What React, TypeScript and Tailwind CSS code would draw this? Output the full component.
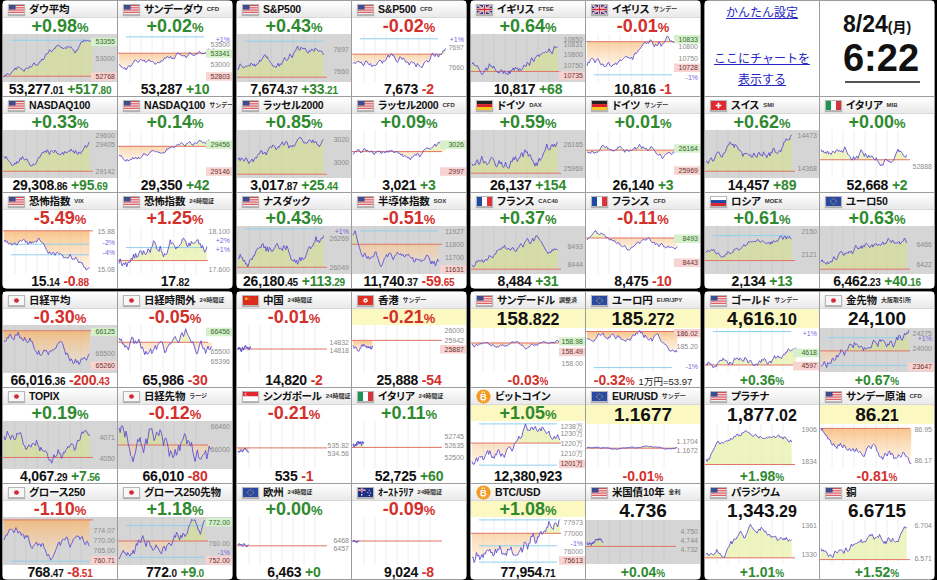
import React from 'react';

type FlagName = 'us' | 'jp' | 'uk' | 'de' | 'fr' | 'ch' | 'it' | 'ru' | 'eu' | 'cn' | 'hk' | 'sg' | 'au' | 'btc';
type Lbl = [string, number, 'g' | 'r' | 'n' | 'p'];

type Q = {
  t?: 'pct' | 'val' | 'link' | 'clock';
  name?: string;
  sub?: string;
  flag?: FlagName;
  pct?: string;
  up?: boolean;
  main?: string;
  dec?: string;
  chg?: string;
  cdec?: string;
  gray?: boolean;
  yel?: boolean;
  lb?: Lbl[];
  bands?: number[];
  pc?: number;
  yr?: [number, number];
  s?: number;
  e?: number;
  end?: number;
  seed?: number;
  extra?: string;
};

const W = 114;

function rng(seed: number) {
  let a = seed * 9973 + 17;
  return () => {
    a = (a + 0x6d2b79f5) | 0;
    let t = Math.imul(a ^ (a >>> 15), 1 | a);
    t = (t + Math.imul(t ^ (t >>> 7), 61 | t)) ^ t;
    return ((t ^ (t >>> 14)) >>> 0) / 4294967296;
  };
}

function Flag({ f }: { f: FlagName }) {
  if (f === 'btc') {
    return (
      <svg width="15" height="15" viewBox="0 0 16 16" className="shrink-0">
        <circle cx="8" cy="8" r="7.6" fill="#f39b22" />
        <path d="M6.6 2.6v2M8.8 2.6v2M6.6 11.4v2M8.8 11.4v2" stroke="#fff" strokeWidth="1" />
        <text x="8" y="11.8" textAnchor="middle" fontSize="10" fontWeight="700" fill="#fff" fontFamily="Liberation Sans">B</text>
      </svg>
    );
  }
  let body: React.ReactNode = null;
  switch (f) {
    case 'us':
      body = (
        <>
          <rect width="16" height="10" fill="#fff" />
          {[0, 2, 4, 6, 8].map((y) => (
            <rect key={y} y={y} width="16" height="1" fill="#cf3c44" />
          ))}
          <rect width="7" height="5" fill="#3d4b8f" />
        </>
      );
      break;
    case 'jp':
      body = (
        <>
          <rect width="16" height="10" fill="#f7f7f7" />
          <circle cx="8" cy="5" r="2.6" fill="#d42a3c" />
        </>
      );
      break;
    case 'uk':
      body = (
        <>
          <rect width="16" height="10" fill="#24408e" />
          <path d="M0 0L16 10M16 0L0 10" stroke="#fff" strokeWidth="2" />
          <path d="M0 0L16 10M16 0L0 10" stroke="#cf2a36" strokeWidth="0.7" />
          <path d="M8 0V10M0 5H16" stroke="#fff" strokeWidth="3" />
          <path d="M8 0V10M0 5H16" stroke="#cf2a36" strokeWidth="1.6" />
        </>
      );
      break;
    case 'de':
      body = (
        <>
          <rect width="16" height="3.4" fill="#222" />
          <rect y="3.4" width="16" height="3.3" fill="#d8202a" />
          <rect y="6.7" width="16" height="3.3" fill="#f7c51c" />
        </>
      );
      break;
    case 'fr':
      body = (
        <>
          <rect width="5.4" height="10" fill="#1f4aa3" />
          <rect x="5.4" width="5.3" height="10" fill="#fff" />
          <rect x="10.7" width="5.3" height="10" fill="#e0313a" />
        </>
      );
      break;
    case 'it':
      body = (
        <>
          <rect width="5.4" height="10" fill="#1d9452" />
          <rect x="5.4" width="5.3" height="10" fill="#fff" />
          <rect x="10.7" width="5.3" height="10" fill="#d5333c" />
        </>
      );
      break;
    case 'ch':
      body = (
        <>
          <rect width="16" height="10" fill="#e0282f" />
          <path d="M8 2V8M5 5H11" stroke="#fff" strokeWidth="1.8" />
        </>
      );
      break;
    case 'ru':
      body = (
        <>
          <rect width="16" height="3.4" fill="#fff" />
          <rect y="3.4" width="16" height="3.3" fill="#1e48a8" />
          <rect y="6.7" width="16" height="3.3" fill="#d7282f" />
        </>
      );
      break;
    case 'eu':
      body = (
        <>
          <rect width="16" height="10" fill="#2a48a6" />
          {Array.from({ length: 12 }).map((_, i) => (
            <circle key={i} cx={8 + 3 * Math.cos((i * Math.PI) / 6)} cy={5 + 3 * Math.sin((i * Math.PI) / 6)} r="0.5" fill="#f6d21e" />
          ))}
        </>
      );
      break;
    case 'cn':
      body = (
        <>
          <rect width="16" height="10" fill="#dc2a1c" />
          <circle cx="3.5" cy="3" r="1.4" fill="#f8d81c" />
          <circle cx="6.3" cy="1.5" r="0.45" fill="#f8d81c" />
          <circle cx="7" cy="3" r="0.45" fill="#f8d81c" />
          <circle cx="6.3" cy="4.5" r="0.45" fill="#f8d81c" />
        </>
      );
      break;
    case 'hk':
      body = (
        <>
          <rect width="16" height="10" fill="#de2f24" />
          <circle cx="8" cy="5" r="2.4" fill="#fff" />
          <circle cx="8" cy="5" r="0.8" fill="#de2f24" />
        </>
      );
      break;
    case 'sg':
      body = (
        <>
          <rect width="16" height="5" fill="#e0262f" />
          <rect y="5" width="16" height="5" fill="#fff" />
          <circle cx="3.4" cy="2.5" r="1.6" fill="#fff" />
          <circle cx="4.1" cy="2.5" r="1.5" fill="#e0262f" />
        </>
      );
      break;
    case 'au':
      body = (
        <>
          <rect width="16" height="10" fill="#1e2f86" />
          <path d="M4 0V5M0 2.5H8" stroke="#fff" strokeWidth="1.4" />
          <path d="M4 0V5M0 2.5H8" stroke="#cf2a36" strokeWidth="0.7" />
          <circle cx="4" cy="7.6" r="0.9" fill="#fff" />
          <circle cx="12" cy="2.5" r="0.6" fill="#fff" />
          <circle cx="10.5" cy="5" r="0.6" fill="#fff" />
          <circle cx="13.2" cy="5.5" r="0.6" fill="#fff" />
          <circle cx="12" cy="8.2" r="0.6" fill="#fff" />
        </>
      );
      break;
  }
  return (
    <span className="inline-flex shrink-0 border border-[#b8b8b8] shadow-[0_1px_1px_rgba(0,0,0,0.25)]">
      <svg width="15" height="9" viewBox="0 0 16 10" preserveAspectRatio="none" className="block">
        {body}
      </svg>
    </span>
  );
}

const LBL = {
  n: { fg: '#8c8c8c', bg: '' },
  g: { fg: '#356b2c', bg: '#d6f0cd' },
  r: { fg: '#6e3434', bg: '#f7d3d1' },
  p: { fg: '#7b5fdc', bg: '' },
};

function Chart({ q, id, h }: { q: Q; id: string; h: number }) {
  const r = rng(q.seed ?? 1);
  const n = 80;
  const raw: number[] = [];
  let v = 0;
  for (let i = 0; i < n; i++) {
    raw.push(v);
    v += (r() - 0.5) * 1.3;
  }
  const s = q.s ?? 0;
  const e = q.e ?? 1;
  const vals = raw.map((x, i) => x - (raw[n - 1] * i) / (n - 1) + s + ((e - s) * i) / (n - 1));
  const mn = Math.min(...vals);
  const mx = Math.max(...vals);
  const [t, b] = q.yr ?? [0.2, 0.8];
  const x1 = (q.end ?? 0.76) * W;
  const pts = vals.map((x, i) => [1 + ((x1 - 1) * i) / (n - 1), (t + ((mx - x) / (mx - mn || 1)) * (b - t)) * h]);
  const line = pts.map(([x, y], i) => `${i ? 'L' : 'M'}${x.toFixed(1)} ${y.toFixed(1)}`).join(' ');
  const pcY = (q.pc ?? 0.5) * h;
  const area = `${line} L${x1.toFixed(1)} ${pcY.toFixed(1)} L1 ${pcY.toFixed(1)} Z`;
  const gray = !!q.gray;
  return (
    <svg width={W} height={h} viewBox={`0 0 ${W} ${h}`} className="block">
      <defs>
        <clipPath id={`${id}a`}>
          <rect x="0" y="0" width={W} height={pcY} />
        </clipPath>
        <clipPath id={`${id}b`}>
          <rect x="0" y={pcY} width={W} height={h - pcY} />
        </clipPath>
        <linearGradient id={`${id}g`} x1="0" y1="0" x2="0" y2="1">
          <stop offset="0" stopColor="#f6b56e" stopOpacity="0.8" />
          <stop offset="1" stopColor="#fde3c4" stopOpacity="0.4" />
        </linearGradient>
      </defs>
      <rect width={W} height={h} fill={gray ? '#d5d5d5' : '#fff'} />
      {[12, 23, 34, 45, 56, 67, 78].map((x) => (
        <line key={x} x1={x} y1="0" x2={x} y2={h} stroke={gray ? '#cbcbcb' : '#eeeeee'} strokeWidth="1" />
      ))}
      <path d={area} fill={gray ? 'rgba(214,224,140,0.6)' : 'rgba(232,240,170,0.75)'} clipPath={`url(#${id}a)`} />
      <path d={area} fill={`url(#${id}g)`} clipPath={`url(#${id}b)`} />
      {(q.bands ?? []).map((y, i) => (
        <line key={i} x1="8" y1={y * h} x2={W - 28} y2={y * h} stroke="#8fd0ee" strokeWidth="1" />
      ))}
      <line x1="0" y1={pcY} x2={W - 24} y2={pcY} stroke="#e07566" strokeWidth="1" />
      <path d={line} fill="none" stroke="#5b4fd6" strokeWidth="0.9" />
      {(q.lb ?? []).map(([txt, y, k], i) => {
        const c = LBL[k];
        const yy = Math.min(Math.max(y * h + 2.5, 7.5), h - 2);
        return (
          <g key={i}>
            {c.bg && <rect x={W - 26} y={yy - 6.5} width="26" height="8.5" fill={c.bg} />}
            <text x={W - 2} y={yy} textAnchor="end" fontSize="7" fill={c.fg} fontFamily="Liberation Sans">
              {txt}
            </text>
          </g>
        );
      })}
    </svg>
  );
}

function Header({ q }: { q: Q }) {
  return (
    <div className="flex h-[17px] shrink-0 items-center gap-[4px] overflow-hidden border-b border-[#d8d8d8] bg-linear-to-b from-white to-[#e9e9e9] pl-[5px]">
      {q.flag && <Flag f={q.flag} />}
      <span className="whitespace-nowrap text-[10.5px] font-bold leading-none tracking-[-0.2px] text-[#111] [font-feature-settings:'palt']">{q.name}</span>
      {q.sub && <span className="whitespace-nowrap text-[6px] font-bold leading-none text-[#333]">{q.sub}</span>}
    </div>
  );
}

function PctCell({ q, id }: { q: Q; id: string }) {
  const col = q.up ? 'text-[#2f8a2f]' : 'text-[#d3302c]';
  return (
    <div className="flex flex-col overflow-hidden bg-white">
      <Header q={q} />
      <div className={`h-[16px] shrink-0 text-center font-bold leading-[17px] ${col} ${q.yel ? 'bg-[#fbf8c2]' : ''}`}>
        <span className="text-[18px]">{q.pct}</span>
        <span className="text-[13px]">%</span>
      </div>
      <Chart q={q} id={id} h={48} />
      <div className="h-[14px] shrink-0 text-center font-bold leading-[14px] tracking-[-0.2px] text-[#111]">
        <span className="text-[14px]">{q.main}</span>
        <span className="text-[10px]">{q.dec}</span>
        {q.chg && (
          <span className={col}>
            <span className="text-[14px]"> {q.chg}</span>
            <span className="text-[10px]">{q.cdec}</span>
          </span>
        )}
      </div>
    </div>
  );
}

function ValCell({ q, id }: { q: Q; id: string }) {
  const col = q.up ? 'text-[#2f8a2f]' : 'text-[#d3302c]';
  return (
    <div className="flex flex-col overflow-hidden bg-white">
      <Header q={q} />
      <div className={`h-[19px] shrink-0 text-center font-bold leading-[20px] text-[#111] ${q.yel ? 'bg-[#fbf8c2]' : ''}`}>
        <span className="text-[19px]">{q.main}</span>
        <span className="text-[16px]">{q.dec}</span>
      </div>
      <Chart q={q} id={id} h={44} />
      <div className="h-[15px] shrink-0 text-center leading-[15px]">
        <span className={`font-bold ${col}`}>
          <span className="text-[14px]">{q.pct}</span>
          <span className="text-[10px]">%</span>
        </span>
        {q.extra && <span className="ml-[4px] text-[9.5px] text-[#222]">{q.extra}</span>}
      </div>
    </div>
  );
}

function LinkCell() {
  return (
    <div className="flex flex-col items-center bg-white pt-[3px] text-[12px] leading-[18px] text-[#2626c4] underline">
      <span>かんたん設定</span>
      <span className="mt-[28px]">ここにチャートを</span>
      <span className="mt-[3px]">表示する</span>
    </div>
  );
}

function ClockCell() {
  return (
    <div className="flex flex-col items-center bg-white text-[#111]">
      <div className="mt-[12px] font-bold leading-none">
        <span className="text-[23px]">8/24</span>
        <span className="text-[14px]">(月)</span>
      </div>
      <div className="mt-[3px] pl-[8px] text-[38px] font-bold leading-none">6:22</div>
      <div className="mt-[4px] ml-[10px] h-[2px] w-[75px] bg-[#555]" />
    </div>
  );
}

const top: Q[][] = [
  [
    { name: 'ダウ平均', flag: 'us', pct: '+0.98', up: true, main: '53,277', dec: '.01', chg: '+517', cdec: '.80', gray: true, pc: 0.88, yr: [0.12, 0.9], s: -7, e: 3, bands: [0.13], lb: [['53355', 0.16, 'g'], ['53000', 0.52, 'n'], ['52768', 0.88, 'r']], end: 0.78 },
    { name: 'サンデーダウ', sub: 'CFD', flag: 'us', pct: '+0.02', up: true, main: '53,287', chg: '+10', pc: 0.4, yr: [0.3, 0.75], s: -4, e: 0, bands: [0.06], lb: [['+1%', 0.04, 'p'], ['53500', 0.22, 'n'], ['53341', 0.4, 'g'], ['53000', 0.64, 'n'], ['52803', 0.88, 'r']], end: 0.84 },
    { name: 'NASDAQ100', flag: 'us', pct: '+0.33', up: true, main: '29,308', dec: '.86', chg: '+95', cdec: '.69', gray: true, pc: 0.86, yr: [0.25, 0.75], s: -2, e: 1, lb: [['29600', 0.06, 'n'], ['29405', 0.3, 'n'], ['29142', 0.86, 'n']] },
    { name: 'NASDAQ100', sub: 'サンデー', flag: 'us', pct: '+0.14', up: true, main: '29,350', chg: '+42', pc: 0.34, yr: [0.2, 0.65], s: -4, e: 0.5, lb: [['29456', 0.3, 'g'], ['29146', 0.86, 'r']], end: 0.8 },
    { name: '恐怖指数', sub: 'VIX', flag: 'us', pct: '-5.49', up: false, main: '15', dec: '.14', chg: '-0', cdec: '.88', pc: 0.1, yr: [0.25, 0.92], s: 3, e: -3, bands: [0.38, 0.6], lb: [['15.88', 0.08, 'n'], ['-2%', 0.34, 'p'], ['-4%', 0.56, 'p'], ['15.08', 0.9, 'n']] },
    { name: '恐怖指数', sub: '24時間証', flag: 'us', pct: '+1.25', up: false, main: '17', dec: '.82', pc: 0.72, yr: [0.25, 0.85], s: -1, e: 1, bands: [0.45], lb: [['18.100', 0.08, 'n'], ['+2%', 0.3, 'p'], ['+1%', 0.48, 'p'], ['17.600', 0.9, 'n']], end: 0.78 },
  ],
  [
    { name: 'S&P500', flag: 'us', pct: '+0.43', up: true, main: '7,674', dec: '.37', chg: '+33', cdec: '.21', gray: true, pc: 0.9, yr: [0.25, 0.75], s: -2, e: 1, bands: [0.15], lb: [['7697', 0.32, 'n'], ['7660', 0.78, 'n']] },
    { name: 'S&P500', sub: 'CFD', flag: 'us', pct: '-0.02', up: false, main: '7,673', chg: '-2', pc: 0.42, yr: [0.3, 0.7], s: -3, e: 0, bands: [0.1], lb: [['+1%', 0.06, 'p'], ['7697', 0.28, 'n'], ['7660', 0.7, 'n']], end: 0.82 },
    { name: 'ラッセル2000', flag: 'us', pct: '+0.85', up: true, main: '3,017', dec: '.87', chg: '+25', cdec: '.44', gray: true, pc: 0.92, yr: [0.15, 0.7], s: -2, e: 2, lb: [['3020', 0.2, 'n'], ['3000', 0.68, 'n']] },
    { name: 'ラッセル2000', sub: 'CFD', flag: 'us', pct: '+0.09', up: true, main: '3,021', chg: '+3', pc: 0.45, yr: [0.25, 0.62], s: -1, e: 0.5, lb: [['3026', 0.3, 'g'], ['2997', 0.86, 'r']], end: 0.82 },
    { name: 'ナスダック', flag: 'us', pct: '+0.43', up: true, main: '26,180', dec: '.45', chg: '+113', cdec: '.29', gray: true, pc: 0.86, yr: [0.2, 0.85], s: -2, e: 1, bands: [0.06], lb: [['+1%', 0.04, 'p'], ['26269', 0.26, 'n'], ['26049', 0.86, 'n']] },
    { name: '半導体指数', sub: 'SOX', flag: 'us', pct: '-0.51', up: false, main: '11,740', dec: '.37', chg: '-59', cdec: '.65', gray: true, pc: 0.38, yr: [0.1, 0.85], s: 4, e: 0, bands: [0.1], lb: [['11927', 0.08, 'n'], ['11800', 0.38, 'n'], ['11700', 0.66, 'n'], ['11631', 0.9, 'r']] },
  ],
  [
    { name: 'イギリス', sub: 'FTSE', flag: 'uk', pct: '+0.64', up: true, main: '10,817', chg: '+68', gray: true, pc: 0.78, yr: [0.25, 0.85], s: 0, e: 3, lb: [['10850', 0.04, 'n'], ['10831', 0.22, 'n'], ['10800', 0.42, 'n'], ['10750', 0.66, 'n'], ['10735', 0.86, 'r']] },
    { name: 'イギリス', sub: 'サンデー', flag: 'uk', pct: '-0.01', up: false, main: '10,816', chg: '-1', pc: 0.16, yr: [0.05, 0.68], s: -3, e: 2, bands: [0.85], lb: [['10833', 0.06, 'g'], ['10800', 0.26, 'n'], ['10750', 0.5, 'n'], ['10728', 0.7, 'r'], ['-1%', 0.9, 'p']], end: 0.8 },
    { name: 'ドイツ', sub: 'DAX', flag: 'de', pct: '+0.59', up: true, main: '26,137', chg: '+154', gray: true, pc: 0.9, yr: [0.25, 0.8], s: -1, e: 2, lb: [['26165', 0.3, 'n'], ['25969', 0.8, 'n']] },
    { name: 'ドイツ', sub: 'サンデー', flag: 'de', pct: '+0.01', up: true, main: '26,140', chg: '+3', pc: 0.42, yr: [0.3, 0.6], s: 0, e: 0.3, lb: [['26164', 0.38, 'g'], ['25969', 0.84, 'r']], end: 0.8 },
    { name: 'フランス', sub: 'CAC40', flag: 'fr', pct: '+0.37', up: true, main: '8,484', chg: '+31', gray: true, pc: 0.9, yr: [0.2, 0.85], s: -2, e: 1, lb: [['8493', 0.42, 'n'], ['8444', 0.8, 'n']] },
    { name: 'フランス', sub: 'CFD', flag: 'fr', pct: '-0.11', up: false, main: '8,475', chg: '-10', pc: 0.25, yr: [0.1, 0.5], s: 1, e: -1, lb: [['8493', 0.26, 'g'], ['8443', 0.76, 'r']], end: 0.8 },
  ],
  [
    { t: 'link' },
    { t: 'clock' },
    { name: 'スイス', sub: 'SMI', flag: 'ch', pct: '+0.62', up: true, main: '14,457', chg: '+89', gray: true, pc: 0.86, yr: [0.1, 0.7], s: -2, e: 2, lb: [['14473', 0.1, 'n'], ['14368', 0.8, 'n']] },
    { name: 'イタリア', sub: 'MIB', flag: 'it', pct: '+0.00', up: true, main: '52,668', chg: '+2', pc: 0.62, yr: [0.35, 0.75], s: 1, e: 0, lb: [['52888', 0.76, 'n']] },
    { name: 'ロシア', sub: 'MOEX', flag: 'ru', pct: '+0.61', up: true, main: '2,134', chg: '+13', gray: true, pc: 0.72, yr: [0.2, 0.65], s: -1, e: 2, bands: [0.2], lb: [['2150', 0.08, 'n'], ['2121', 0.6, 'n']] },
    { name: 'ユーロ50', flag: 'eu', pct: '+0.63', up: true, main: '6,462', dec: '.23', chg: '+40', cdec: '.16', gray: true, pc: 0.9, yr: [0.25, 0.8], s: -2, e: 2, lb: [['6466', 0.38, 'n'], ['6422', 0.8, 'n']] },
  ],
];

const bottom: Q[][] = [
  [
    { name: '日経平均', flag: 'jp', pct: '-0.30', up: false, main: '66,016', dec: '.36', chg: '-200', cdec: '.43', gray: true, pc: 0.12, yr: [0.15, 0.82], s: 0, e: -2, lb: [['66125', 0.14, 'g'], ['65500', 0.6, 'n'], ['65260', 0.84, 'r']] },
    { name: '日経時間外', sub: '24時間証', flag: 'jp', pct: '-0.05', up: false, main: '65,986', chg: '-30', pc: 0.36, yr: [0.08, 0.62], s: 1, e: 0, lb: [['66456', 0.14, 'g'], ['65500', 0.56, 'n'], ['65396', 0.76, 'n']], end: 0.82 },
    { name: 'TOPIX', flag: 'jp', pct: '+0.19', up: true, main: '4,067', dec: '.29', chg: '+7', cdec: '.56', gray: true, pc: 0.76, yr: [0.2, 0.88], s: 1, e: 1, lb: [['4071', 0.34, 'n'], ['4050', 0.78, 'n']] },
    { name: '日経先物', sub: 'ラージ', flag: 'jp', pct: '-0.12', up: false, main: '66,010', chg: '-80', gray: true, pc: 0.5, yr: [0.1, 0.85], s: 1, e: -0.5, lb: [['66460', 0.12, 'n'], ['66000', 0.6, 'n']], end: 0.82 },
    { name: 'グロース250', flag: 'jp', pct: '-1.10', up: false, main: '768', dec: '.47', chg: '-8', cdec: '.51', gray: true, pc: 0.06, yr: [0.22, 0.9], s: 0, e: -1, bands: [0.92], lb: [['774.07', 0.28, 'n'], ['770.00', 0.48, 'n'], ['765.00', 0.7, 'n'], ['760.71', 0.9, 'r']] },
    { name: 'グロース250先物', flag: 'jp', pct: '+1.18', up: true, main: '772', dec: '.0', chg: '+9', cdec: '.0', gray: true, pc: 0.5, yr: [0.05, 0.88], s: -2, e: 3, bands: [0.18, 0.84], lb: [['772.00', 0.04, 'g'], ['760.00', 0.56, 'n'], ['-1%', 0.74, 'p'], ['752.00', 0.9, 'r']] },
  ],
  [
    { name: '中国', sub: '24時間証', flag: 'cn', pct: '-0.01', up: false, main: '14,820', chg: '-2', pc: 0.5, yr: [0.42, 0.56], s: 0, e: 0, end: 0.12, lb: [['14832', 0.36, 'n'], ['14818', 0.54, 'n']] },
    { name: '香港', sub: 'サンデー', flag: 'hk', pct: '-0.21', up: false, yel: true, main: '25,888', chg: '-54', pc: 0.32, yr: [0.4, 0.55], s: 0, e: -1, end: 0.18, lb: [['26000', 0.12, 'n'], ['25942', 0.32, 'n'], ['25887', 0.5, 'r']] },
    { name: 'シンガポール', sub: '24時間証', flag: 'sg', pct: '-0.21', up: false, main: '535', chg: '-1', pc: 0.56, yr: [0.56, 0.66], s: 0, e: -1, end: 0.1, lb: [['535.82', 0.5, 'n'], ['534.56', 0.68, 'n']] },
    { name: 'イタリア', sub: '24時間証', flag: 'it', pct: '+0.11', up: true, main: '52,725', chg: '+60', pc: 0.55, yr: [0.42, 0.55], s: 0, e: 1, end: 0.1, lb: [['52745', 0.32, 'n'], ['52635', 0.5, 'n'], ['52500', 0.76, 'n']] },
    { name: '欧州', sub: '24時間証', flag: 'eu', pct: '+0.00', up: true, main: '6,463', chg: '+0', pc: 0.6, yr: [0.55, 0.62], s: 0, e: 0, end: 0.1, lb: [['6468', 0.48, 'n'], ['6457', 0.66, 'n']] },
    { name: 'ｵｰｽﾄﾗﾘｱ', sub: '24時間証', flag: 'au', pct: '-0.09', up: false, main: '9,024', chg: '-8', pc: 0.5, yr: [0.48, 0.54], s: 0, e: 0, end: 0.06, lb: [] },
  ],
  [
    { t: 'val', name: 'サンデードル', sub: '調整済', flag: 'us', main: '158', dec: '.822', yel: true, pct: '-0.03', up: false, pc: 0.34, yr: [0.28, 0.48], s: 0, e: 0, end: 0.8, lb: [['158.98', 0.3, 'g'], ['158.49', 0.54, 'r'], ['158.00', 0.8, 'n']] },
    { t: 'val', name: 'ユーロ円', sub: 'EUR/JPY', flag: 'eu', main: '185', dec: '.272', yel: true, pct: '-0.32', up: false, extra: '1万円=53.97', pc: 0.08, yr: [0.06, 0.55], s: 0, e: -3, bands: [0.9], end: 0.8, lb: [['186.02', 0.06, 'r'], ['185.20', 0.42, 'n'], ['-1%', 0.88, 'p']] },
    { name: 'ビットコイン', flag: 'btc', pct: '+1.05', up: true, yel: true, main: '12,380,923', pc: 0.46, yr: [0.06, 0.9], s: 0, e: 3, bands: [0.06, 0.92], end: 0.78, lb: [['1238万', 0.04, 'n'], ['1230万', 0.26, 'n'], ['1220万', 0.47, 'n'], ['1210万', 0.68, 'n'], ['1201万', 0.89, 'r']] },
    { t: 'val', name: 'EUR/USD', sub: 'サンデー', flag: 'eu', main: '1.1677', yel: true, pct: '-0.01', up: false, pc: 0.55, yr: [0.5, 0.58], s: 0, e: 0, end: 0.8, lb: [['1.1704', 0.4, 'n'], ['1.1672', 0.6, 'n']] },
    { name: 'BTC/USD', flag: 'btc', pct: '+1.08', up: true, yel: true, main: '77,954', dec: '.71', pc: 0.34, yr: [0.05, 0.95], s: 0, e: 4, bands: [0.06, 0.6, 0.94], end: 0.78, lb: [['77973', 0.04, 'n'], ['77000', 0.34, 'n'], ['-1%', 0.55, 'p'], ['76000', 0.72, 'n'], ['75613', 0.9, 'r']] },
    { t: 'val', name: '米国債10年', sub: '金利', flag: 'us', main: '4.736', pct: '+0.04', up: true, gray: true, pc: 0.6, yr: [0.42, 0.58], s: 0, e: 0, end: 0.15, lb: [['4.750', 0.26, 'n'], ['4.744', 0.46, 'n'], ['4.732', 0.66, 'n']] },
  ],
  [
    { t: 'val', name: 'ゴールド', sub: 'サンデー', flag: 'us', main: '4,616', dec: '.10', yel: true, pct: '+0.36', up: true, pc: 0.84, yr: [0.45, 0.9], s: 0, e: 3, bands: [0.08], end: 0.8, lb: [['+1%', 0.06, 'p'], ['4618', 0.56, 'g'], ['4597', 0.86, 'r']] },
    { t: 'val', name: '金先物', sub: '大阪取引所', flag: 'jp', main: '24,100', pct: '+0.67', up: true, gray: true, pc: 0.52, yr: [0.05, 0.9], s: -3, e: 2, bands: [0.22, 0.85], end: 0.78, lb: [['24275', 0.04, 'n'], ['+1%', 0.24, 'p'], ['24000', 0.46, 'n'], ['23647', 0.88, 'r']] },
    { t: 'val', name: 'プラチナ', flag: 'us', main: '1,877', dec: '.02', pct: '+1.98', up: true, pc: 0.92, yr: [0.15, 0.85], s: -2, e: 2, lb: [['1906', 0.1, 'n'], ['1834', 0.86, 'n']] },
    { t: 'val', name: 'サンデー原油', sub: 'CFD', flag: 'us', main: '86', dec: '.21', yel: true, pct: '-0.81', up: false, pc: 0.1, yr: [0.1, 0.9], s: 2, e: -3, end: 0.8, lb: [['86.95', 0.1, 'n'], ['86.17', 0.84, 'n']] },
    { t: 'val', name: 'パラジウム', flag: 'us', main: '1,343', dec: '.29', pct: '+1.01', up: true, pc: 0.86, yr: [0.1, 0.85], s: -1, e: 2, lb: [['1361', 0.1, 'n'], ['1330', 0.78, 'n']] },
    { t: 'val', name: '銅', flag: 'us', main: '6.6715', pct: '+1.52', up: true, pc: 0.9, yr: [0.15, 0.85], s: -2, e: 2, lb: [['6.704', 0.12, 'n'], ['6.571', 0.88, 'n']] },
  ],
];

function Cell({ q, id }: { q: Q; id: string }) {
  if (q.t === 'link') return <LinkCell />;
  if (q.t === 'clock') return <ClockCell />;
  if (q.t === 'val') return <ValCell q={q} id={id} />;
  return <PctCell q={q} id={id} />;
}

function Section({ groups, base }: { groups: Q[][]; base: number }) {
  return (
    <div className="flex gap-[3px] px-[2px]">
      {groups.map((g, gi) => (
        <div key={gi} className="grid w-[231px] grid-cols-2 grid-rows-[repeat(3,95px)] gap-px overflow-hidden rounded-[5px] bg-[#9c9c9c] p-px">
          {g.map((q, i) => {
            const seed = base + gi * 6 + i + 1;
            return <Cell key={i} q={{ ...q, seed: q.seed ?? seed * 7 + 3 }} id={`c${seed}`} />;
          })}
        </div>
      ))}
    </div>
  );
}

export default function App() {
  return (
    <div className="h-[580px] w-[937px] overflow-hidden bg-black font-['Liberation_Sans','Noto_Sans_CJK_JP',sans-serif]">
      <Section groups={top} base={0} />
      <div className="h-[2px]" />
      <Section groups={bottom} base={24} />
    </div>
  );
}
